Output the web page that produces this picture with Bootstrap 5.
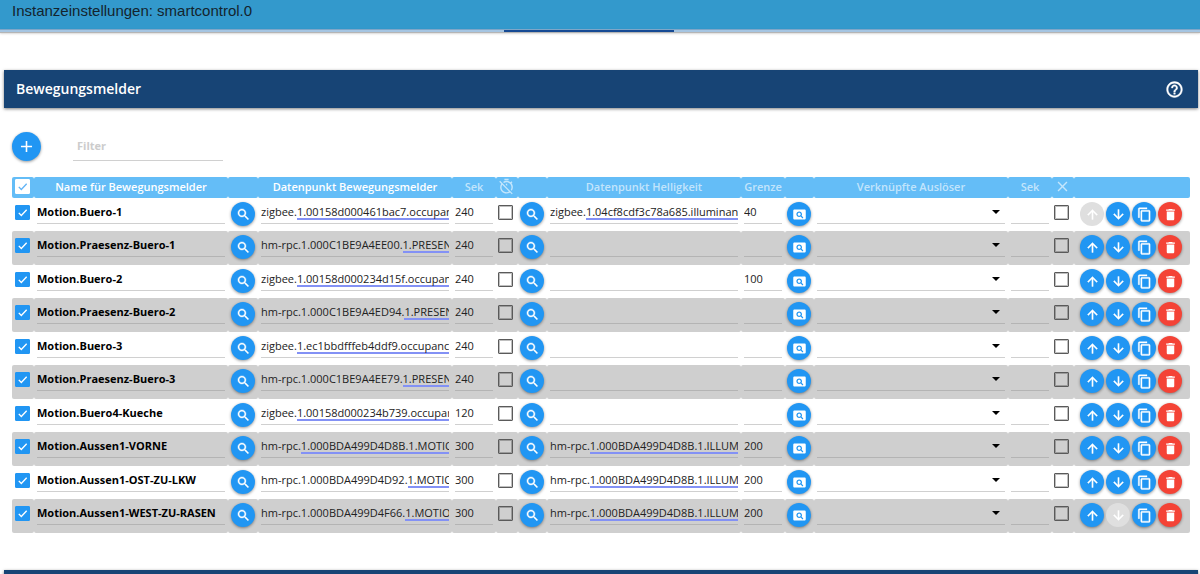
<!DOCTYPE html>
<html lang="de">
<head>
<meta charset="utf-8">
<meta name="viewport" content="width=device-width, initial-scale=1">
<title>Instanzeinstellungen: smartcontrol.0</title>
<link rel="stylesheet" href="https://cdn.jsdelivr.net/npm/bootstrap@5.3.0/dist/css/bootstrap.min.css">
<style>
  :root { --blue: #2196f3; --navy: #174475; --line: #d0d0d0; }
  body { font-family: "Open Sans", "Noto Sans", sans-serif; font-size: 11px; color: #222; }
  svg { fill: currentColor; display: block; flex: none; }

  .app-bar { height: 29px; background: #3399cc; padding: 0 12px; font: 15px/22px "Liberation Sans", sans-serif; color: #13242e; }
  .tab-strip { height: 4px; background: #a5c5e2; border-top: 1px solid #7fa6c8; border-bottom: 1px solid #b5b5b5; box-shadow: 0 1px 2px rgba(0,0,0,.15); }
  .tab-marker { width: 170px; height: 2px; background: #164a94; margin-left: 42%; }

  .first-panel { padding-top: 37px; }
  .next-panel { padding-top: 37px; }
  .panel-bar { height: 38px; background: var(--navy); color: #fff; padding: 0 14px 0 12px; margin: 0 2px 0 4px; box-shadow: 0 1px 3px rgba(0,0,0,.5); }
  .panel-bar h2 { font-size: 14px; font-weight: 600; line-height: 20px; }
  .help-btn { color: #fff; }
  .tool-row { height: 29px; gap: 32px; }
  .table-wrap { padding: 0 10px 0 12px; }

  .rnd { width: 24px; height: 24px; border: 0; padding: 0; border-radius: 50%; background: var(--blue); color: #fff; display: flex; align-items: center; justify-content: center; box-shadow: 0 1px 3px rgba(0,0,0,.4); }
  .rnd svg { width: 15px; height: 15px; stroke: currentColor; stroke-width: .6; }
  .rnd:disabled { background: #dfdfdf; color: #fff; box-shadow: none; }
  .rnd-red { background: #f44336; }
  .rnd-big { width: 29px; height: 29px; }
  .rnd-big svg { width: 19px; height: 19px; }

  .line-in { display: block; width: 100%; height: 23px; padding: 0 0 1px; border: 0; border-bottom: 1px solid var(--line); border-radius: 0; background: transparent; color: inherit; font-size: 11px; line-height: 20px; outline: 0; }
  .filter-in { width: 150px; height: 29px; padding-left: 4px; font-weight: 700; }
  .filter-in::placeholder { color: #ccc; }
  .name-in { font-weight: 700; color: #000; }
  .marked { background: linear-gradient(#8391f5, #8391f5) var(--from) 17px / 100% 2px no-repeat; }
  select.line-in { appearance: none; background: url("data:image/svg+xml,%3Csvg xmlns='http://www.w3.org/2000/svg' viewBox='0 0 8 4'%3E%3Cpath d='M0 0h8L4 4z'/%3E%3C/svg%3E") right 5px top 9px / 8px 4px no-repeat; }

  .rules { width: 100%; table-layout: fixed; border-collapse: separate; border-spacing: 0; }
  .rules th { height: 21px; padding: 0; background: #64bdf7; color: rgba(255,255,255,.62); font-weight: 600; line-height: 19px; text-align: center; border-radius: 2px; vertical-align: top; }
  .rules th.req { color: #fff; }
  .rules th svg { margin: 1px auto 0 2px; }
  .rules th.all-cell { padding: 2px 0 0 3px; }
  .rules td { height: 33px; padding: 3px 3px 0; vertical-align: top; border-radius: 2px; }
  .rules tbody tr:nth-child(even) td { height: 34px; background: #cfcfcf; }
  .rules tbody tr:nth-child(even) { --line: #b4b4b4; }
  .rules td.btn-cell { padding-top: 4px; }
  .rules td.tight { padding-left: 2px; }
  .rules td.acts { padding-left: 6px; }
  .rules td.box-cell { padding: 7px 0 0 2px; }
  .rules td.box-cell:first-child { padding-left: 3px; }
  .acts-row { gap: 2px; }

  .form-check-input.box { display: block; width: 15px; height: 15px; margin: 0; border: 1px solid #5a5a5a; border-radius: 1px; background-color: transparent; box-shadow: inset 0 0 0 1px rgba(0,0,0,.25); }
  .form-check-input.box:checked { box-shadow: none; border-color: var(--blue); background: var(--blue) url("data:image/svg+xml,%3Csvg xmlns='http://www.w3.org/2000/svg' viewBox='0 0 14 14'%3E%3Cpath d='M3 7.4l2.7 2.7L11.5 4' fill='none' stroke='%23fff' stroke-width='1.5'/%3E%3C/svg%3E") center / 100% no-repeat; }
  .form-check-input.box-all:checked { border-color: #fff; background: #fff url("data:image/svg+xml,%3Csvg xmlns='http://www.w3.org/2000/svg' viewBox='0 0 14 14'%3E%3Cpath d='M3 7.4l2.7 2.7L11.5 4' fill='none' stroke='%2364b5f6' stroke-width='1.5'/%3E%3C/svg%3E") center / 100% no-repeat; }
</style>
</head>
<body>
<svg width="0" height="0" class="d-none" aria-hidden="true">
  <symbol id="i-search" viewBox="0 0 24 24"><path d="M15.5 14h-.79l-.28-.27C15.41 12.59 16 11.11 16 9.5 16 5.91 13.09 3 9.5 3S3 5.91 3 9.5 5.91 16 9.5 16c1.61 0 3.09-.59 4.23-1.57l.27.28v.79l5 4.99L20.49 19l-4.99-5zm-6 0C7.01 14 5 11.99 5 9.5S7.01 5 9.5 5 14 7.01 14 9.5 11.99 14 9.5 14z"/></symbol>
  <symbol id="i-view" viewBox="0 0 24 24"><path stroke="none" d="M11.5 9C10.12 9 9 10.12 9 11.5s1.12 2.5 2.5 2.5 2.5-1.12 2.5-2.5S12.88 9 11.5 9zM20 4H4c-1.1 0-2 .9-2 2v12c0 1.1.9 2 2 2h16c1.1 0 2-.9 2-2V6c0-1.1-.9-2-2-2zm-3.21 14.21l-2.91-2.91c-.69.44-1.51.7-2.39.7C9.01 16 7 13.99 7 11.5S9.01 7 11.5 7 16 9.01 16 11.5c0 .88-.26 1.69-.7 2.39l2.91 2.9-1.42 1.42z"/></symbol>
  <symbol id="i-up" viewBox="0 0 24 24"><path d="M4 12l1.41 1.41L11 7.83V20h2V7.83l5.58 5.59L20 12l-8-8-8 8z"/></symbol>
  <symbol id="i-down" viewBox="0 0 24 24"><path d="M20 12l-1.41-1.41L13 16.17V4h-2v12.17l-5.58-5.59L4 12l8 8 8-8z"/></symbol>
  <symbol id="i-copy" viewBox="0 0 24 24"><path d="M16 1H4c-1.1 0-2 .9-2 2v14h2V3h12V1zm3 4H8c-1.1 0-2 .9-2 2v14c0 1.1.9 2 2 2h11c1.1 0 2-.9 2-2V7c0-1.1-.9-2-2-2zm0 16H8V7h11v14z"/></symbol>
  <symbol id="i-delete" viewBox="0 0 24 24"><path stroke="none" d="M6 19c0 1.1.9 2 2 2h8c1.1 0 2-.9 2-2V7H6v12zM19 4h-3.5l-1-1h-5l-1 1H5v2h14V4z"/></symbol>
</svg>

<div class="vh-100 overflow-hidden d-flex flex-column">
  <header class="flex-shrink-0">
    <div class="app-bar">Instanzeinstellungen: smartcontrol.0</div>
    <div class="tab-strip"><div class="tab-marker"></div></div>
  </header>

  <main class="flex-shrink-0">
    <section class="first-panel">
      <div class="panel-bar d-flex align-items-center justify-content-between">
        <h2 class="m-0">Bewegungsmelder</h2>
        <button type="button" class="help-btn btn p-0 border-0" aria-label="Hilfe">
          <svg width="19" height="19" viewBox="0 0 24 24" stroke="currentColor" stroke-width=".5"><path d="M11 18h2v-2h-2v2zm1-16C6.48 2 2 6.48 2 12s4.48 10 10 10 10-4.48 10-10S17.52 2 12 2zm0 18c-4.41 0-8-3.59-8-8s3.59-8 8-8 8 3.59 8 8-3.59 8-8 8zm0-14c-2.21 0-4 1.79-4 4h2c0-1.1.9-2 2-2s2 .9 2 2c0 2-3 1.75-3 5h2c0-2.25 3-2.5 3-5 0-2.21-1.79-4-4-4z"/></svg>
        </button>
      </div>

      <div class="tool-row d-flex align-items-center px-2 mx-1 mt-4 mb-3">
        <button type="button" class="rnd rnd-big" aria-label="Hinzufügen"><svg viewBox="0 0 24 24"><path stroke="none" d="M19 13h-6v6h-2v-6H5v-2h6V5h2v6h6v2z"/></svg></button>
        <input class="line-in filter-in" type="text" placeholder="Filter" aria-label="Filter">
      </div>

      <div class="table-wrap">
        <table class="rules">
          <colgroup>
            <col style="width:22px"><col><col style="width:30px"><col><col style="width:44px"><col style="width:22px"><col style="width:29px"><col><col style="width:44px"><col style="width:29px"><col><col style="width:44px"><col style="width:22px"><col style="width:116px">
          </colgroup>
          <thead>
            <tr>
              <th class="all-cell"><input class="form-check-input box box-all" type="checkbox" checked aria-label="Alle aktivieren"></th>
              <th class="req">Name für Bewegungsmelder</th>
              <th></th>
              <th class="req">Datenpunkt Bewegungsmelder</th>
              <th>Sek</th>
              <th><svg width="17" height="17" viewBox="0 0 24 24"><path d="M19.04 4.55l-1.42 1.42C16.07 4.74 14.12 4 12 4c-1.83 0-3.53.55-4.95 1.48l1.46 1.46C9.53 6.35 10.73 6 12 6c3.87 0 7 3.13 7 7 0 1.27-.35 2.47-.94 3.49l1.45 1.45C20.45 16.53 21 14.83 21 13c0-2.12-.74-4.07-1.97-5.61l1.42-1.42-1.41-1.42zM15 1H9v2h6V1zm-4 8.44l2 2V8h-2v1.44zM3.02 4L1.75 5.27 4.5 8.03C3.55 9.45 3 11.16 3 13c0 4.97 4.02 9 9 9 1.84 0 3.55-.55 4.98-1.5l2.5 2.5 1.27-1.27-7.71-7.71L3.02 4zM12 20c-3.87 0-7-3.13-7-7 0-1.28.35-2.48.95-3.52l9.56 9.56c-1.03.61-2.23.96-3.51.96z"/></svg></th>
              <th></th>
              <th>Datenpunkt Helligkeit</th>
              <th>Grenze</th>
              <th></th>
              <th>Verknüpfte Auslöser</th>
              <th>Sek</th>
              <th><svg width="17" height="17" viewBox="0 0 24 24"><path d="M19 6.41L17.59 5 12 10.59 6.41 5 5 6.41 10.59 12 5 17.59 6.41 19 12 13.41 17.59 19 19 17.59 13.41 12z"/></svg></th>
              <th></th>
            </tr>
          </thead>
          <tbody id="rows"></tbody>
        </table>
      </div>
    </section>

    <section class="next-panel">
      <div class="panel-bar"></div>
    </section>
  </main>
</div>

<script src="https://cdn.jsdelivr.net/npm/bootstrap@5.3.0/dist/js/bootstrap.bundle.min.js"></script>
<script>
  // A "|" in a data point marks where the underlined part of the id begins.
  const lux = 'hm-rpc.|1.000BDA499D4D8B.1.ILLUMINATION';
  const data = [
    ['Motion.Buero-1', 'zigbee.|1.00158d000461bac7.occupancy', 240, 'zigbee.|1.04cf8cdf3c78a685.illuminance', 40],
    ['Motion.Praesenz-Buero-1', 'hm-rpc.1.000C1BE9A4EE00.|1.PRESENCE', 240, '', ''],
    ['Motion.Buero-2', 'zigbee.|1.00158d000234d15f.occupancy', 240, '', 100],
    ['Motion.Praesenz-Buero-2', 'hm-rpc.1.000C1BE9A4ED94.|1.PRESENCE', 240, '', ''],
    ['Motion.Buero-3', 'zigbee.|1.ec1bbdfffeb4ddf9.occupancy', 240, '', ''],
    ['Motion.Praesenz-Buero-3', 'hm-rpc.1.000C1BE9A4EE79.|1.PRESENCE', 240, '', ''],
    ['Motion.Buero4-Kueche', 'zigbee.|1.00158d000234b739.occupancy', 120, '', ''],
    ['Motion.Aussen1-VORNE', 'hm-rpc.|1.000BDA499D4D8B.1.MOTION', 300, lux, 200],
    ['Motion.Aussen1-OST-ZU-LKW', 'hm-rpc.1.000BDA499D4D92.|1.MOTION', 300, lux, 200],
    ['Motion.Aussen1-WEST-ZU-RASEN', 'hm-rpc.1.000BDA499D4F66.|1.MOTION', 300, lux, 200]
  ];
  const pen = document.createElement('canvas').getContext('2d');
  pen.font = '11px "Open Sans", "Noto Sans", sans-serif';

  const icon = n => `<svg viewBox="0 0 24 24"><use href="#i-${n}"/></svg>`;
  const rnd = (n, label, cls = '', off = false) =>
    `<button type="button" class="rnd ${cls}" aria-label="${label}"${off ? ' disabled' : ''}>${icon(n)}</button>`;
  const field = (v, label, cls = '') => `<td><input class="line-in ${cls}" type="text" value="${v}" aria-label="${label}"></td>`;
  const point = (v, label) => {
    if (!v) return field('', label);
    const from = Math.round(pen.measureText(v.split('|')[0]).width);
    return `<td><input class="line-in marked" style="--from:${from}px" type="text" spellcheck="false" value="${v.replace('|', '')}" aria-label="${label}"></td>`;
  };
  const box = (label, on) => `<td class="box-cell"><input class="form-check-input box" type="checkbox" aria-label="${label}"${on ? ' checked' : ''}></td>`;
  const pick = (n, cls = '') => `<td class="btn-cell ${cls}">${rnd(n, 'Auswählen')}</td>`;

  document.getElementById('rows').innerHTML = data.map(([name, dp, sec, bright, limit], i) => `<tr>
    ${box('Aktiv', true)}${field(name, 'Name', 'name-in')}
    ${pick('search')}${point(dp, 'Datenpunkt Bewegungsmelder')}${field(sec, 'Sekunden')}${box('Timer aus')}
    ${pick('search', 'tight')}${point(bright, 'Datenpunkt Helligkeit')}${field(limit, 'Grenze')}
    ${pick('view', 'tight')}<td><select class="line-in" aria-label="Verknüpfte Auslöser"><option></option></select></td>
    ${field('', 'Sekunden')}${box('Aus')}
    <td class="btn-cell acts"><div class="d-flex acts-row">
      ${rnd('up', 'Nach oben', '', i === 0)}${rnd('down', 'Nach unten', '', i === data.length - 1)}
      ${rnd('copy', 'Kopieren')}${rnd('delete', 'Löschen', 'rnd-red')}
    </div></td></tr>`).join('');
</script>
</body>
</html>
